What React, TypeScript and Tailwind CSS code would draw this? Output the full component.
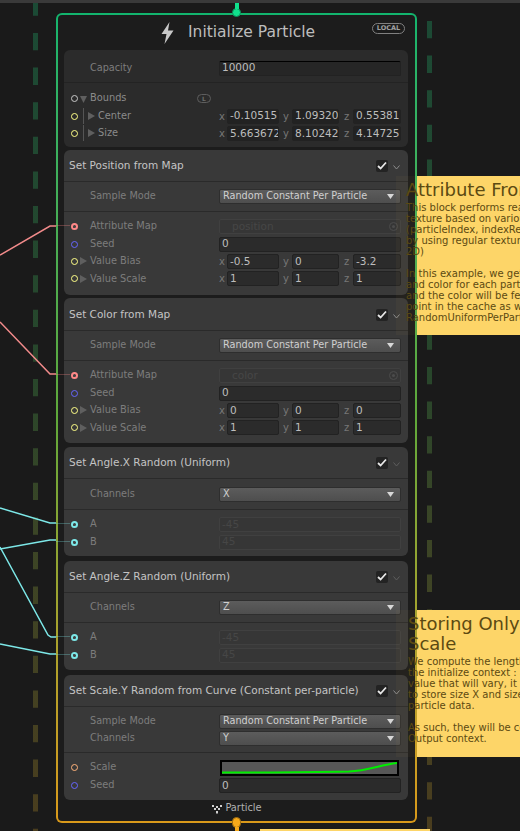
import { ReactNode } from 'react';

const font = { fontFamily: '"DejaVu Sans", sans-serif' };

function Triangle({ dir = 'right' }: { dir?: 'right' | 'down' }) {
  return (
    <svg width="7" height="8" viewBox="0 0 7 8" className="shrink-0">
      <polygon points={dir === 'right' ? '0,0 7,4 0,8' : '0,1 7,1 3.5,8'} fill="#5f5f5f" />
    </svg>
  );
}

function Port({ color, linked }: { color: string; linked?: boolean }) {
  return (
    <span className="relative ml-[6.5px] mr-[0.5px] flex h-[7px] w-[7px] shrink-0 items-center justify-center rounded-full" style={{ border: `${linked ? 2.5 : 1.5}px solid ${color}` }}>
      {linked && (
        <>
          <span className="h-[2px] w-[2px] rounded-full bg-[#444]" />
          <span className="absolute right-[6px] top-[0px] h-px w-[14px] opacity-30" style={{ background: color }} />
        </>
      )}
    </span>
  );
}

function Input({ children, className = '' }: { children?: ReactNode; className?: string }) {
  return (
    <div className={`flex h-[15px] items-center overflow-hidden whitespace-nowrap rounded-[2px] border border-[#222] bg-[#2b2b2b] pl-[2px] text-[10.5px] text-[#bdbdbd] ${className}`}>
      {children}
    </div>
  );
}

function Disabled({ children, target }: { children: ReactNode; target?: boolean }) {
  return (
    <div className={`flex h-[15px] w-[182px] items-center justify-between rounded-[2px] border border-[#404040] bg-[#363636] pr-[2px] text-[10.5px] text-[#464646] ${target ? 'pl-[12px]' : 'pl-[2px]'}`}>
      <span>{children}</span>
      {target && <span className="flex h-[9px] w-[9px] items-center justify-center rounded-full border border-[#4c4c4c]"><span className="h-[3px] w-[3px] rounded-full bg-[#4c4c4c]" /></span>}
    </div>
  );
}

function Select({ value }: { value: string }) {
  return (
    <div className="flex h-[15px] w-[182px] items-center justify-between rounded-[2px] border border-[#2e2e2e] bg-gradient-to-b from-[#5c5c5c] to-[#4e4e4e] pl-[3px] pr-[6px] text-[9.7px] text-[#d0d0d0]">
      <span>{value}</span>
      <svg width="7" height="5" viewBox="0 0 7 5"><polygon points="0,0 7,0 3.5,5" fill="#d8d8d8" /></svg>
    </div>
  );
}

function Vec({ values, dark }: { values: string[]; dark?: boolean }) {
  const cls = dark ? 'rounded-[1px] border-[#2a2a2a] bg-[#222]' : '';
  return (
    <div className="flex items-center text-[10px] text-[#777]">
      <span className="w-[8px]">x</span>
      <Input className={`w-[52px] ${cls}`}>{values[0]}</Input>
      <span className="w-[13px] pl-[4px]">y</span>
      <Input className={`w-[47px] ${cls}`}>{values[1]}</Input>
      <span className="w-[14px] pl-[5px]">z</span>
      <Input className={`w-[48px] ${cls}`}>{values[2]}</Input>
    </div>
  );
}

function Row({ label, port, linked, fold, nested, children, dim }: {
  label: string;
  port?: string;
  linked?: boolean;
  fold?: 'right' | 'down';
  nested?: boolean;
  dim?: boolean;
  children?: ReactNode;
}) {
  return (
    <div className="flex h-[17.4px] items-center text-[9.8px]">
      <div className="flex w-[155px] items-center">
        {port ? <Port color={port} linked={linked} /> : <span className="w-[14px]" />}
        {nested ? (
          <span className="ml-[5px] mr-[4px] h-[16px] w-px bg-[#555]" />
        ) : (
          <span className="w-[2px]" />
        )}
        <span className={`flex items-center ${fold ? 'gap-[3px]' : 'pl-[10px]'}`}>
          {fold && <Triangle dir={fold} />}
          <span className={dim ? 'text-[#7d7d7d]' : 'text-[#8a8a8a]'}>{label}</span>
        </span>
      </div>
      {children}
    </div>
  );
}

function Block({ title, dimChevron, className = '', settings, settingsClass, children }: {
  title: string;
  dimChevron?: boolean;
  className?: string;
  settings: ReactNode;
  settingsClass: string;
  children: ReactNode;
}) {
  return (
    <div className={`rounded-[6px] bg-[#393939] ${className}`}>
      <div className="flex h-[32px] items-center border-b border-[#2a2a2a] pl-[5px] pr-[8px] text-[10.5px] text-[#c4c4c4]">
        <span className="whitespace-nowrap">{title}</span>
        <span className="ml-auto flex h-[12px] w-[12px] items-center justify-center rounded-[2px] bg-[#232323]">
          <svg width="10" height="9" viewBox="0 0 10 9"><path d="M1 5 L3.6 7.5 L9 1.5" fill="none" stroke="#e8e8e8" strokeWidth="1.8" /></svg>
        </span>
        <svg width="7" height="5" viewBox="0 0 7 5" className="ml-[5px] mt-[3px]">
          <path d="M0.5 0.5 L3.5 4 L6.5 0.5" fill="none" stroke={dimChevron ? '#5e5e5e' : '#8c8c8c'} strokeWidth="1" />
        </svg>
      </div>
      <div className={`flex flex-col justify-center gap-[2px] border-b border-[#2a2a2a] ${settingsClass}`}>{settings}</div>
      <div className="flex flex-col pt-[6px]">{children}</div>
    </div>
  );
}

function SettingRow({ label, value }: { label: string; value: string }) {
  return (
    <div className="flex items-center text-[9.7px] text-[#7d7d7d]">
      <span className="w-[155px] pl-[26px]">{label}</span>
      <Select value={value} />
    </div>
  );
}

function Note({ className, title, lines, inset }: { className: string; title: string[]; lines: string[]; inset: string }) {
  return (
    <div className={`absolute left-[396px] w-[124px] overflow-hidden whitespace-nowrap ${className}`} style={font}>
      <div className="absolute inset-y-0 left-0 w-[21px] bg-[#fdd568]/[0.04]" />
      <div className="absolute inset-y-0 left-[21px] right-0 bg-[#fdd568]" />
      <div className={`relative pt-[4px] ${inset}`}>
        <div className="text-[18px] leading-[20px] text-[#5c4a12]">
          {title.map((t) => <div key={t}>{t}</div>)}
        </div>
        <div className="mt-[2px] text-[10px] leading-[11px] text-[#5c4a12]">
          {lines.map((l, i) => (
            <div key={i} className="h-[11px]">{l}</div>
          ))}
        </div>
      </div>
    </div>
  );
}

function Graph() {
  return (
    <svg className="absolute left-0 top-0" width="520" height="831" viewBox="0 0 520 831">
      <defs>
        <linearGradient id="dash" gradientUnits="userSpaceOnUse" x1="0" y1="0" x2="0" y2="831">
          <stop offset="0" stopColor="#1b4a35" />
          <stop offset="0.45" stopColor="#28462b" />
          <stop offset="0.65" stopColor="#3c4526" />
          <stop offset="1" stopColor="#4a3d1e" />
        </linearGradient>
      </defs>
      <line x1="35.5" y1="0" x2="35.5" y2="831" stroke="url(#dash)" strokeWidth="5" strokeDasharray="17.3 17.3" strokeDashoffset="1.6" />
      <line x1="429.5" y1="21" x2="429.5" y2="831" stroke="url(#dash)" strokeWidth="5" strokeDasharray="17.3 17.3" />
      <g fill="none" strokeWidth="1.5">
        <path d="M0 255 L50 226 L56 226" stroke="#f28b8b" />
        <path d="M0 322 L50 374 L56 374" stroke="#f28b8b" />
        <path d="M0 508 L50 523 L56 523" stroke="#7de8e8" />
        <path d="M0 549 L50 540 L56 540" stroke="#7de8e8" />
        <path d="M0 547 L48 635 L51 637 L56 637" stroke="#7de8e8" />
        <path d="M0 644 L50 654 L56 654" stroke="#7de8e8" />
      </g>
    </svg>
  );
}

export default function App() {
  return (
    <div className="relative h-[831px] w-[520px] overflow-hidden bg-[#1a1a1a]" style={font}>
      <Graph />
      <div className="relative h-[3px] bg-[#3a3a3a]" />

      {/* context node */}
      <div className="relative ml-[56px] mt-[10px] h-[810px] w-[361px] rounded-[6px] bg-gradient-to-b from-[#12b56e] via-[#5fa83a] to-[#d9991a] p-[2px]">
        <div className="flex h-full flex-col rounded-[4px] bg-[#1c1c1c] pl-[6px] pr-[7px]">
          <div className="relative flex h-[35px] shrink-0 items-center pl-[97px]">
            <svg width="13" height="22" viewBox="0 0 13 22" className="mr-[14px]">
              <path d="M8.5 0 L0.5 12 L5.5 12 L3.5 22 L12.5 8.5 L7 8.5 Z" fill="#c8c8c8" />
            </svg>
            <span className="text-[15.5px] text-[#bdbdbd]">Initialize Particle</span>
            <span className="absolute right-[3px] top-[8px] flex h-[11px] w-[33px] items-center justify-center rounded-full border border-[#808080] text-[6.5px] font-bold text-[#a0a0a0]">LOCAL</span>
          </div>

          {/* capacity and bounds */}
          <div className="h-[97px] shrink-0 rounded-[6px] bg-[#2b2b2b]">
            <div className="flex h-[33px] items-center border-b border-[#232323] pt-[4px] text-[9.7px] text-[#7d7d7d]">
              <span className="w-[155px] pl-[26px]">Capacity</span>
              <Input className="w-[182px] border-t-black bg-[#262626] pb-[1px]">10000</Input>
            </div>
            <div className="flex flex-col pt-[7px]">
              <Row label="Bounds" port="#c8c8c8" fold="down">
                <span className="-ml-[22px] flex h-[9px] w-[14px] items-center justify-center rounded-full border border-[#5e5e5e] text-[6px] font-bold text-[#6c6c6c]">L</span>
              </Row>
              <Row label="Center" port="#ffff88" fold="right" nested>
                <Vec dark values={['-0.10515', '1.09320', '0.55381']} />
              </Row>
              <Row label="Size" port="#ffff88" fold="right" nested>
                <Vec dark values={['5.663672', '8.10242', '4.14725']} />
              </Row>
            </div>
          </div>

          <Block
            className="mt-[3px] h-[145px] shrink-0"
            title="Set Position from Map"
            settingsClass="h-[30px]"
            settings={<SettingRow label="Sample Mode" value="Random Constant Per Particle" />}
          >
            <Row label="Attribute Map" port="#ff8888" linked dim><Disabled target>position</Disabled></Row>
            <Row label="Seed" port="#6666ff" dim><Input className="w-[182px]">0</Input></Row>
            <Row label="Value Bias" port="#ffff88" fold="right" dim><Vec values={['-0.5', '0', '-3.2']} /></Row>
            <Row label="Value Scale" port="#ffff88" fold="right" dim><Vec values={['1', '1', '1']} /></Row>
          </Block>

          <Block
            className="mt-[3px] h-[145px] shrink-0 pt-[1px]"
            title="Set Color from Map"
            settingsClass="h-[30px]"
            settings={<SettingRow label="Sample Mode" value="Random Constant Per Particle" />}
          >
            <Row label="Attribute Map" port="#ff8888" linked dim><Disabled target>color</Disabled></Row>
            <Row label="Seed" port="#6666ff" dim><Input className="w-[182px]">0</Input></Row>
            <Row label="Value Bias" port="#ffff88" fold="right" dim><Vec values={['0', '0', '0']} /></Row>
            <Row label="Value Scale" port="#ffff88" fold="right" dim><Vec values={['1', '1', '1']} /></Row>
          </Block>

          <Block
            className="mt-[4px] h-[109px] shrink-0"
            title="Set Angle.X Random (Uniform)"
            dimChevron
            settingsClass="h-[31px]"
            settings={<SettingRow label="Channels" value="X" />}
          >
            <Row label="A" port="#7de8e8" linked dim><Disabled>-45</Disabled></Row>
            <Row label="B" port="#7de8e8" linked dim><Disabled>45</Disabled></Row>
          </Block>

          <Block
            className="mt-[5px] h-[109px] shrink-0"
            title="Set Angle.Z Random (Uniform)"
            dimChevron
            settingsClass="h-[30px]"
            settings={<SettingRow label="Channels" value="Z" />}
          >
            <Row label="A" port="#7de8e8" linked dim><Disabled>-45</Disabled></Row>
            <Row label="B" port="#7de8e8" linked dim><Disabled>45</Disabled></Row>
          </Block>

          <Block
            className="mt-[5px] h-[125px] shrink-0"
            title="Set Scale.Y Random from Curve (Constant per-particle)"
            settingsClass="h-[46px]"
            settings={
              <>
                <SettingRow label="Sample Mode" value="Random Constant Per Particle" />
                <SettingRow label="Channels" value="Y" />
              </>
            }
          >
            <div className="-mt-[1px] flex h-[19px] items-center text-[9.8px]">
              <div className="flex w-[155px] items-center">
                <Port color="#ffb27a" />
                <span className="pl-[12px] text-[#7d7d7d]">Scale</span>
              </div>
              <div className="ml-[1px] h-[16px] w-[179px] border-2 border-black bg-[#575757]">
                <svg width="175" height="12" viewBox="0 0 175 12" className="block">
                  <path d="M0 10.5 C60 10.5 90 10 127 9.5 C146 8.5 158 3 175 1" fill="none" stroke="#00ee00" strokeWidth="2" />
                </svg>
              </div>
            </div>
            <Row label="Seed" port="#6666ff" dim><Input className="w-[182px]">0</Input></Row>
          </Block>

          <div className="flex flex-1 items-start justify-center gap-[3px] pl-[2px] pt-[1px] text-[9.8px] text-[#b0b0b0]">
            <svg width="10" height="10" viewBox="0 0 10 10" className="mt-[3px]">
              <g fill="#d0d0d0">
                <rect x="0" y="1" width="2" height="2" /><rect x="4" y="2" width="2" height="2" /><rect x="8" y="1" width="2" height="2" />
                <rect x="2" y="4" width="2" height="2" /><rect x="6" y="4" width="2" height="2" /><rect x="4" y="7" width="2" height="2.5" />
              </g>
            </svg>
            <span>Particle</span>
          </div>
        </div>
      </div>

      {/* flow anchors */}
      <div className="absolute left-[232px] top-[8px] h-[9px] w-[9px] rounded-full border border-[#0b8d5a] bg-[#10e08c]" />
      <div className="absolute left-[234.5px] top-[3px] h-[6px] w-[4px] bg-[#10e08c]" />
      <div className="absolute left-[232px] top-[817px] h-[11px] w-[9px] rounded-full border border-[#9c6b10] bg-[#f5a81a]" />
      <div className="absolute left-[234.5px] top-[827px] h-[4px] w-[4px] bg-[#f5a81a]" />

      <Note
        className="top-[176px] h-[159px]"
        inset="pl-[10px]"
        title={['Attribute From Map']}
        lines={[
          'This block performs reads from a',
          'texture based on various modes',
          '(particleIndex, indexRelative, ...)',
          'by using regular texture sampling',
          '2D)',
          '',
          'In this example, we get a position',
          'and color for each particle',
          'and the color will be fetched at this',
          'point in the cache as we use',
          'RandomUniformPerParticle',
        ]}
      />
      <Note
        className="top-[610px] h-[147px]"
        inset="pl-[12px]"
        title={['Storing Only', 'Scale']}
        lines={[
          'We compute the length of the',
          'the initialize context : as it is a',
          'value that will vary, it is better',
          'to store size X and size Y in the',
          'particle data.',
          '',
          'As such, they will be constant in the',
          'Output context.',
        ]}
      />
      <div className="absolute left-[260px] top-[829px] h-[2px] w-[170px] bg-[#fdd568]" />
    </div>
  );
}
